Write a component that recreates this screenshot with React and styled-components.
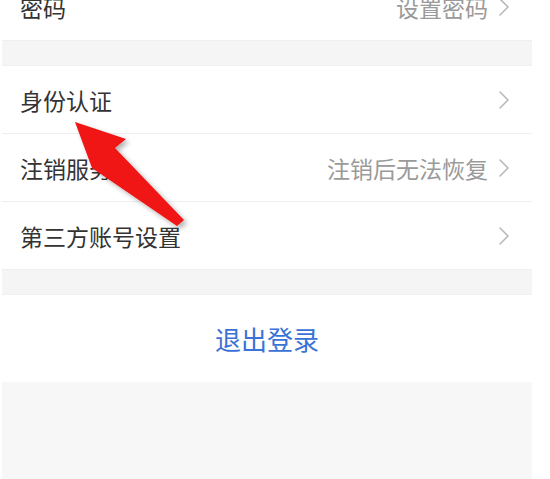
import React from "react";
import styled, { createGlobalStyle } from "styled-components";

const GlobalStyle = createGlobalStyle`
  html, body {
    margin: 0;
    padding: 0;
    background: #ffffff;
    overflow: hidden;
  }
  body {
    font-family: "Noto Sans CJK SC", "Noto Sans", sans-serif;
  }
`;

const groups = [
  [{ label: "密码", value: "设置密码" }],
  [
    { label: "身份认证", value: "" },
    { label: "注销服务", value: "注销后无法恢复" },
    { label: "第三方账号设置", value: "" },
  ],
];

function Chevron() {
  return (
    <svg width="12" height="20" viewBox="0 0 12 20">
      <polyline
        points="2,2 10,10 2,18"
        fill="none"
        stroke="#b8b8b8"
        strokeWidth="1.6"
        strokeLinecap="round"
        strokeLinejoin="round"
      />
    </svg>
  );
}

function App() {
  return (
    <>
      <GlobalStyle />
      <Page>
        <Screen>
          {groups.map((group, gi) => (
            <React.Fragment key={gi}>
              {gi > 0 && <Band />}
              <Group>
                {group.map((row) => (
                  <Row key={row.label}>
                    <Label>{row.label}</Label>
                    <Right>
                      {row.value && <Value>{row.value}</Value>}
                      <Chevron />
                    </Right>
                  </Row>
                ))}
              </Group>
            </React.Fragment>
          ))}
          <Band />
          <Logout>退出登录</Logout>
          <Footer />
          <Pointer width="200" height="240" viewBox="0 0 200 240">
            <defs>
              <filter id="sh" x="-20%" y="-20%" width="150%" height="150%">
                <feDropShadow dx="3" dy="3" stdDeviation="2.5" floodColor="#000" floodOpacity="0.3" />
              </filter>
            </defs>
            <polygon
              points="73,122 124,139 113,148 182,220 175,226 90,168"
              fill="#f01414"
              filter="url(#sh)"
            />
          </Pointer>
        </Screen>
      </Page>
    </>
  );
}

export default App;

const Page = styled.div`
  width: 550px;
  height: 479px;
  overflow: hidden;
  background: #ffffff;
`;

const Screen = styled.div`
  position: relative;
  width: 530px;
  margin-left: 2px;
  margin-top: -27px;
  display: flex;
  flex-direction: column;
`;

const Group = styled.div`
  display: flex;
  flex-direction: column;
  background: #ffffff;
`;

const Row = styled.div`
  height: 67px;
  display: flex;
  align-items: center;
  justify-content: space-between;
  padding: 0 22px 0 18px;
  border-bottom: 1px solid #efefef;

  &:last-child {
    border-bottom: none;
  }
`;

const Label = styled.span`
  font-size: 23px;
  color: #333333;
`;

const Right = styled.div`
  display: flex;
  align-items: center;
  gap: 10px;
`;

const Value = styled.span`
  font-size: 23px;
  color: #9a9a9a;
`;

const Band = styled.div`
  height: 24px;
  background: #f5f5f5;
  border-top: 1px solid #efefef;
  border-bottom: 1px solid #f0f0f0;
`;

const Logout = styled.div`
  height: 87px;
  display: flex;
  align-items: center;
  justify-content: center;
  font-size: 26px;
  color: #3a72d6;
  background: #ffffff;
`;

const Footer = styled.div`
  height: 120px;
  background: #f7f7f7;
`;

const Pointer = styled.svg`
  position: absolute;
  left: 0;
  top: 27px;
  pointer-events: none;
`;
